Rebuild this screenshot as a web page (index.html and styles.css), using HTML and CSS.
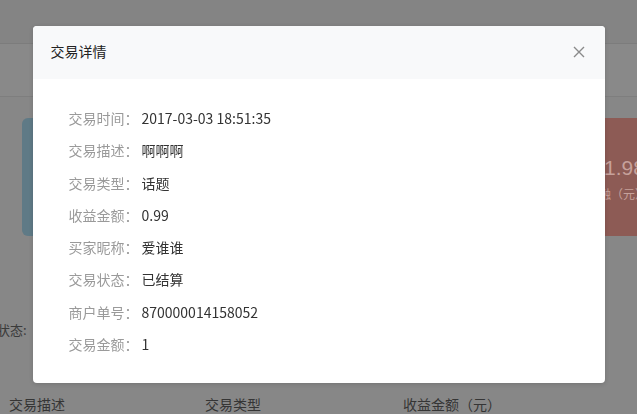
FILE: index.html
```html
<!DOCTYPE html>
<html lang="zh-CN">
<head>
    <meta charset="UTF-8">
    <title>交易详情</title>
    <link rel="stylesheet" href="styles.css">
</head>
<body>
    <div class="page">
        <div class="topbar"></div>
        <div class="tabs"></div>
        <div class="cards">
            <div class="card card-blue"></div>
            <div class="card card-red">
                <div class="card-num">1.98</div>
                <div class="card-label">金融（元）</div>
            </div>
        </div>
        <div class="filter">交易状态:</div>
        <div class="table-head">
            <span class="col col-desc">交易描述</span>
            <span class="col col-type">交易类型</span>
            <span class="col">收益金额（元）</span>
        </div>
    </div>

    <div class="mask">
        <div class="modal">
            <div class="modal-header">
                <span class="modal-title">交易详情</span>
                <span class="modal-close">
                    <svg width="12" height="12" viewBox="0 0 12 12">
                        <path d="M1 1L11 11M11 1L1 11" stroke="#8a8a8a" stroke-width="1.4" fill="none"/>
                    </svg>
                </span>
            </div>
            <div class="modal-body">
                <div class="row"><span class="label">交易时间：</span><span class="value">2017-03-03 18:51:35</span></div>
                <div class="row"><span class="label">交易描述：</span><span class="value">啊啊啊</span></div>
                <div class="row"><span class="label">交易类型：</span><span class="value">话题</span></div>
                <div class="row"><span class="label">收益金额：</span><span class="value">0.99</span></div>
                <div class="row"><span class="label">买家昵称：</span><span class="value">爱谁谁</span></div>
                <div class="row"><span class="label">交易状态：</span><span class="value">已结算</span></div>
                <div class="row"><span class="label">商户单号：</span><span class="value">870000014158052</span></div>
                <div class="row"><span class="label">交易金额：</span><span class="value">1</span></div>
            </div>
        </div>
    </div>
</body>
</html>
```

FILE: styles.css
```css
body {
    margin: 0;
    font-family: "Noto Sans CJK SC", "Noto Sans", sans-serif;
    font-size: 14px;
    background-color: #878787;
    overflow: hidden;
    height: 414px;
}
.page {
    width: 637px;
}
.topbar {
    height: 43px;
    background-color: #848484;
    border-bottom: 1px solid #7c7c7c;
}
.tabs {
    height: 52px;
    background-color: #898989;
    border-bottom: 1px solid #7e7e7e;
}
.cards {
    display: flex;
    justify-content: space-between;
    padding: 21px 0 0 22px;
    height: 118px;
}
.card {
    height: 118px;
    border-radius: 6px;
}
.card-blue {
    width: 260px;
    background-color: #5f7a86;
}
.card-red {
    width: 120px;
    margin-right: -43px;
    background-color: #8d5b55;
    color: #c6a19b;
    overflow: hidden;
}
.card-num {
    font-family: "Liberation Sans", sans-serif;
    font-size: 21px;
    margin: 37px 0 0 44px;
    line-height: 26px;
}
.card-label {
    font-size: 12px;
    margin: 5px 0 0 27px;
    line-height: 16px;
    white-space: nowrap;
}
.filter {
    margin: 84px 0 0 -29px;
    color: #3a3a3a;
    font-size: 13px;
    line-height: 20px;
}
.table-head {
    display: flex;
    margin-top: 54px;
    padding-left: 9px;
    color: #353535;
    font-size: 14px;
    line-height: 20px;
}
.col-desc {
    width: 196px;
}
.col-type {
    width: 198px;
}
.mask {
    position: fixed;
    top: 0;
    left: 0;
    right: 0;
    bottom: 0;
    display: flex;
    justify-content: center;
    align-items: flex-start;
    padding-top: 26px;
}
.modal {
    width: 572px;
    height: 357px;
    background-color: #fff;
    border-radius: 4px;
    overflow: hidden;
    box-shadow: 0 1px 4px rgba(0,0,0,0.15);
}
.modal-header {
    height: 52px;
    background-color: #f8f9fa;
    display: flex;
    align-items: center;
    justify-content: space-between;
    padding: 0 20px 1px 18px;
}
.modal-title {
    color: #222;
    font-size: 14px;
    margin-top: -2px;
}
.modal-close {
    display: flex;
}
.modal-body {
    padding: 23px 36px;
}
.row {
    line-height: 32.3px;
    height: 32.3px;
    white-space: nowrap;
}
.label {
    color: #9a9a9a;
}
.value {
    color: #333;
    margin-left: 3px;
}
```
